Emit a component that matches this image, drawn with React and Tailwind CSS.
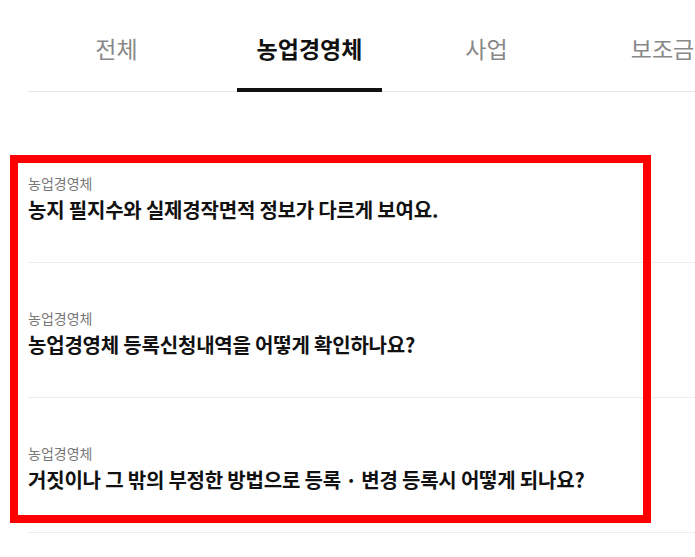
const tabs = [
  { label: "전체", ml: "ml-[44px]" },
  { label: "농업경영체", ml: "ml-[48px]", active: true },
  { label: "사업", ml: "ml-[32px]" },
  { label: "보조금", ml: "ml-[31px]" },
];

const faqs = [
  { category: "농업경영체", title: "농지 필지수와 실제경작면적 정보가 다르게 보여요." },
  { category: "농업경영체", title: "농업경영체 등록신청내역을 어떻게 확인하나요?" },
  { category: "농업경영체", title: "거짓이나 그 밖의 부정한 방법으로 등록 · 변경 등록시 어떻게 되나요?" },
];

export default function App() {
  return (
    <div
      className="relative h-[557px] w-[695px] overflow-hidden bg-white"
      style={{ fontFamily: '"Noto Sans CJK KR", "Noto Sans", sans-serif' }}
    >
      {/* tabs */}
      <div className="relative flex h-[92px] whitespace-nowrap">
        <div className="absolute bottom-0 left-[28px] right-0 h-px bg-[#e8e8e8]" />
        {tabs.map((tab) => (
          <div key={tab.label} className={`relative flex w-[145px] shrink-0 flex-col ${tab.ml}`}>
            <span
              className={
                tab.active
                  ? "flex h-[88px] items-center justify-center pt-2 text-[23px] font-bold text-[#111]"
                  : "flex h-[88px] items-center justify-center pt-2 text-[23px] text-[#888]"
              }
            >
              {tab.label}
            </span>
            <div className={tab.active ? "h-1 bg-[#111]" : "h-1"} />
          </div>
        ))}
      </div>

      {/* list */}
      <ul className="ml-[28px] mt-[36px]">
        {faqs.map((faq) => (
          <li key={faq.title} className="h-[135px] border-b border-[#ececec] pt-[45px]">
            <p className="h-5 text-[14px] leading-5 text-[#777]">{faq.category}</p>
            <p className="mt-[3px] whitespace-nowrap text-[20px] font-bold leading-[27px] tracking-[-0.2px] text-[#111]">
              {faq.title}
            </p>
          </li>
        ))}
      </ul>

      {/* highlight box */}
      <div className="pointer-events-none absolute left-[10px] top-[155px] h-[368px] w-[641px] border-8 border-[#ff0000]" />
    </div>
  );
}
